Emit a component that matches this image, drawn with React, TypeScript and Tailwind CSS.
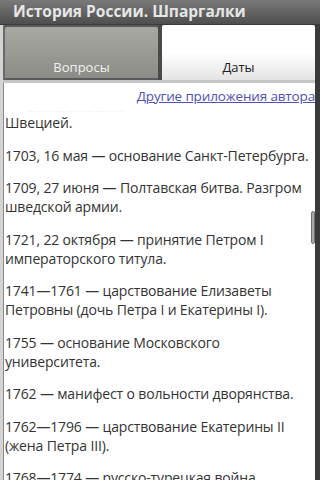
const items: string[] = [
  "1703, 16 мая — основание Санкт-Петербурга.",
  "1709, 27 июня — Полтавская битва. Разгром шведской армии.",
  "1721, 22 октября — принятие Петром I императорского титула.",
  "1741—1761 — царствование Елизаветы Петровны (дочь Петра I и Екатерины I).",
  "1755 — основание Московского университета.",
  "1762 — манифест о вольности дворянства.",
  "1762—1796 — царствование Екатерины II (жена Петра III).",
  "1768—1774 — русско-турецкая война.",
];

export default function App() {
  return (
    <div
      className="w-[320px] h-[480px] overflow-hidden flex flex-col bg-[#d4d4d4]"
      style={{ fontFamily: '"Open Sans", "Noto Sans", sans-serif' }}
    >
      {/* title bar */}
      <div className="h-[25px] shrink-0 flex items-center pl-[13px] bg-gradient-to-b from-[#7a7a7a] to-[#4e4e4e] border-b border-[#3a3a3a]">
        <span className="text-[15.5px] font-bold text-[#e6e6e6] leading-none">История России. Шпаргалки</span>
      </div>

      <div className="flex-1 flex min-h-0">
        <div className="flex-1 flex flex-col min-w-0 pl-[3px]">
          {/* tabs */}
          <div className="h-[55px] shrink-0 flex bg-[#5a5a5a] border-l-2 border-[#6a6a6a]">
            <div className="w-[153px] mt-[2px] mb-[2px] flex items-end justify-center pb-[1px] bg-gradient-to-b from-[#a9a9a3] to-[#8c8c87] rounded-t-[2px]">
              <span className="text-[13px] text-[#f0f0f0]">Вопросы</span>
            </div>
            <div className="w-[4px] bg-[#4a4a4a]" />
            <div className="flex-1 flex items-end justify-center pb-[3px] bg-gradient-to-b from-white via-white to-[#e4e4e4] rounded-t-[2px]">
              <span className="text-[13px] text-[#222]">Даты</span>
            </div>
          </div>
          <div className="h-[3px] shrink-0 bg-[#c6c6c6]" />

          {/* content */}
          <div className="relative flex-1 min-h-0 overflow-hidden bg-white border-l border-[#8a8a8a] text-[14px] leading-[19px] text-[#333] tracking-[-0.15px]">
            <div className="text-right pt-[3px]">
              <span className="text-[13.5px] text-[#5050b8] underline whitespace-nowrap">Другие приложения автора</span>
            </div>
            <div className="pl-[1px]">
              <p className="text-[#f0f0f0] h-[7px] overflow-hidden leading-[7px] text-[8px] pl-[22px]">— — — — — — — — — —</p>
              <p className="mb-[13.5px]">Швецией.</p>
              {items.map((t) => (
                <p key={t} className="mb-[13.5px]">
                  {t}
                </p>
              ))}
            </div>
            {/* scrollbar thumb */}
            <div className="absolute right-0 top-[128px] w-[4px] h-[33px] rounded-[2px] bg-[#a8a8a8] border border-[#707070]" />
          </div>
        </div>

        {/* right edge */}
        <div className="w-[5px] shrink-0 bg-[#3a3a3a]" />
      </div>
    </div>
  );
}
